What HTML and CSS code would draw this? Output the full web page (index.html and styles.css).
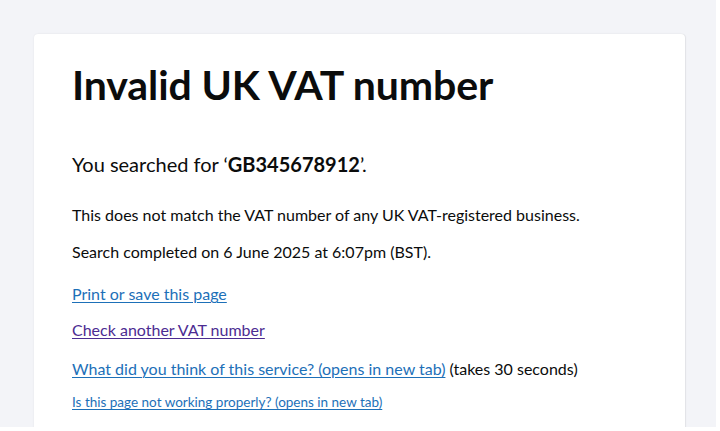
FILE: index.html
```html
<!DOCTYPE html>
<html lang="en">
<head>
<meta charset="utf-8">
<title>Invalid UK VAT number</title>
<link rel="stylesheet" href="styles.css">
</head>
<body>
<div class="page">
  <main class="card">
    <h1 class="title">Invalid UK VAT number</h1>
    <p class="lead">You searched for ‘<strong>GB345678912</strong>’.</p>
    <p class="body first">This does not match the VAT number of any UK VAT-registered business.</p>
    <p class="body second">Search completed on 6 June 2025 at 6:07pm (BST).</p>
    <p class="body wide">
      <a class="link" href="#">Print or save this page</a>
    </p>
    <p class="body">
      <a class="link visited" href="#">Check another VAT number</a>
    </p>
    <p class="body mid">
      <a class="link" href="#">What did you think of this service? (opens in new tab)</a> (takes 30 seconds)
    </p>
    <p class="small">
      <a class="link" href="#">Is this page not working properly? (opens in new tab)</a>
    </p>
  </main>
</div>
</body>
</html>
```
FILE: styles.css
```css
html, body {
  margin: 0;
  padding: 0;
  background: #ffffff;
}

body {
  font-family: Lato, "Liberation Sans", Arial, sans-serif;
  color: #0b0c0c;
  overflow: hidden;
}

.page {
  width: 716px;
  height: 427px;
  background: #f3f4f8;
  padding: 34px 0 0 34px;
  box-sizing: border-box;
  overflow: hidden;
}

.card {
  width: 651px;
  min-height: 420px;
  background: #ffffff;
  border-radius: 4px;
  box-shadow: 0 0 2px rgba(0, 0, 0, 0.08), 1px 0 1px rgba(0, 0, 0, 0.05);
  padding: 27px 0 0 38px;
  box-sizing: border-box;
}

.title {
  margin: 0;
  font-size: 41px;
  line-height: 48px;
  font-weight: 700;
  letter-spacing: -0.1px;
}

.lead {
  margin: 42px 0 0;
  font-size: 20px;
  line-height: 26px;
}

.lead strong {
  font-weight: 700;
}

/* body copy: 16px with roughly 36px between baselines */
.body {
  margin: 16px 0 0;
  font-size: 16px;
  line-height: 20px;
}

.body.first {
  margin-top: 28px;
}

.body.second {
  margin-top: 17px;
}

.body.wide {
  margin-top: 22px;
}

.body.mid {
  margin-top: 19px;
}

.small {
  margin: 15px 0 0;
  font-size: 13.5px;
  line-height: 16px;
}

.link {
  color: #1d70b8;
  text-decoration: underline;
  text-decoration-thickness: 1px;
  text-underline-offset: 2px;
}

.link.visited {
  color: #4c2c92;
}
```
